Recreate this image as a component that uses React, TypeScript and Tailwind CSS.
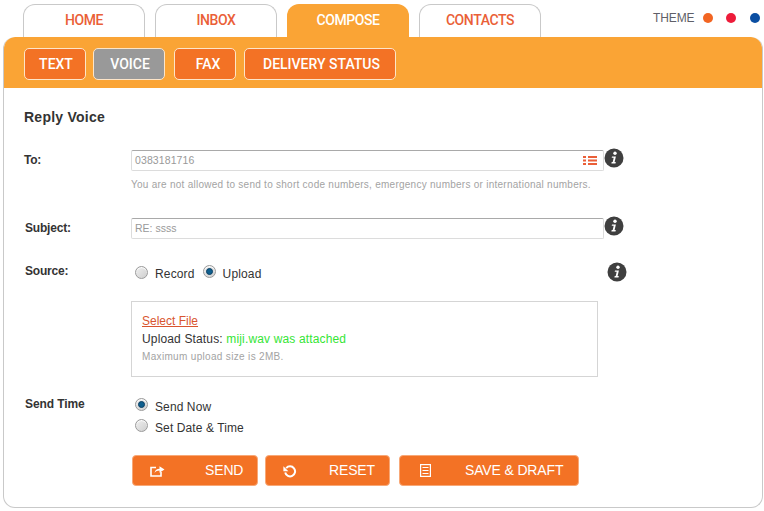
import React from "react";

const Tab = ({ label, active }: { label: string; active?: boolean }) => (
  <div
    className={
      active
        ? "w-[122px] h-[33px] rounded-t-[12px] bg-[#faa435] text-white flex items-center justify-center text-[14px] font-medium pb-[1px] tracking-[-0.4px]"
        : "w-[122px] h-[33px] rounded-t-[12px] border border-b-0 border-[#c9c9c9] bg-white text-[#ea5f38] flex items-center justify-center text-[14px] font-medium pb-[1px] tracking-[-0.4px]"
    }
  >
    {label}
  </div>
);

const Sub = ({ label, w, gray, pl }: { label: string; w: string; gray?: boolean; pl: string }) => (
  <div
    className={`${w} ${pl} ${gray ? "bg-[#999999]" : "bg-[#f37225]"} h-[32px] rounded-[5px] border border-[#fde5c8] text-white text-[14px] font-medium flex items-center justify-center`}
  >
    {label}
  </div>
);

const Info = () => (
  <svg width="20" height="20" viewBox="0 0 20 20" className="block">
    <circle cx="10" cy="10" r="9.5" fill="#3f3f3f" />
    <circle cx="11" cy="5.2" r="1.7" fill="#fff" />
    <path d="M8 8.4h3.9l-1.3 5.6h1.2l-.3 1.4H7.4l.3-1.4h1l1-4.2H7.7z" fill="#fff" />
  </svg>
);

const Radio = ({ on }: { on?: boolean }) => (
  <span className="mb-[2px] w-[13px] h-[13px] rounded-full border border-[#9a9a9a] bg-gradient-to-br from-[#efefef] to-[#cfcfcf] flex items-center justify-center shrink-0 shadow-[inset_0_1px_1px_#fff]">
    {on && <span className="w-[7px] h-[7px] rounded-full bg-[#0f5f8e] border border-[#0b3f63]" />}
  </span>
);

const ActionButton = ({ w, icon, label, pl, tx }: { w: string; icon: React.ReactNode; label: string; pl: string; tx: string }) => (
  <div className={`${w} ${pl} h-[31px] bg-[#f37225] rounded-[4px] border border-[#f8a877] text-white text-[14px] tracking-[-0.15px] flex items-center`}>
    <span className="w-[16px] flex justify-center shrink-0">{icon}</span>
    <span className={tx}>{label}</span>
  </div>
);

export default function App() {
  return (
    <div className="w-[764px] h-[511px] bg-white overflow-hidden font-['Liberation_Sans',Arial,sans-serif] text-[#333]">
      <div className="flex h-[37px] pt-[4px] pl-[23px] font-['Roboto',sans-serif]">
        <div className="flex gap-[10px]">
          <Tab label="HOME" />
          <Tab label="INBOX" />
          <Tab label="COMPOSE" active />
          <Tab label="CONTACTS" />
        </div>
        <div className="ml-[112px] flex items-start pt-[9px] font-['Liberation_Sans',sans-serif] text-[12px] leading-[10px] tracking-[-0.1px] text-[#5f5f68]">
          <span>THEME</span>
          <span className="ml-[8px] w-[10px] h-[10px] rounded-full bg-[#f26522]" />
          <span className="ml-[13px] w-[10px] h-[10px] rounded-full bg-[#ed1c3a]" />
          <span className="ml-[14px] w-[10px] h-[10px] rounded-full bg-[#0b4ea2]" />
        </div>
      </div>

      <div className="ml-[3px] w-[760px] h-[471px] rounded-[12px] border border-[#c9c9c9] border-t-0 overflow-hidden">
        <div className="-mx-px h-[51px] bg-[#faa435] rounded-t-[12px] flex gap-[8px] pl-[21px] pt-[11px] font-['Roboto',sans-serif]">
          <Sub label="TEXT" w="w-[62px]" pl="pl-[2px]" />
          <Sub label="VOICE" w="w-[72px] -ml-px" pl="pl-[2px]" gray />
          <Sub label="FAX" w="w-[62px] ml-px" pl="pl-[6px]" />
          <Sub label="DELIVERY STATUS" w="w-[152px]" pl="pl-[3px]" />
        </div>

        <div className="pl-[20px]">
          <h1 className="mt-[21px] h-[17px] text-[14px] leading-[17px] font-bold tracking-[0.25px] text-[#333]">Reply Voice</h1>

          <div className="mt-[24px] flex">
            <label className="w-[107px] text-[12px] leading-[14px] font-bold pt-[3px] tracking-[-0.2px]">To:</label>
            <div>
              <div className="flex items-start">
                <div className="w-[473px] h-[21px] border border-[#dcdcdc] border-t-[#a9a9a9] rounded-[2px] flex items-center justify-between pl-[3px] pr-[6px] text-[10.5px] tracking-[0.1px] text-[#999]">
                  <span>0383181716</span>
                  <svg width="14" height="11" viewBox="0 0 14 11" fill="#ea5f38">
                    <rect x="0" y="1" width="3" height="2" />
                    <rect x="5" y="1" width="9" height="2" />
                    <rect x="0" y="4.5" width="3" height="2" />
                    <rect x="5" y="4.5" width="9" height="2" />
                    <rect x="0" y="8" width="3" height="2" />
                    <rect x="5" y="8" width="9" height="2" />
                  </svg>
                </div>
                <span className="-mt-[2px]"><Info /></span>
              </div>
              <p className="mt-[8px] text-[10px] leading-[12px] tracking-[0.26px] text-[#a3a3a3]">
                You are not allowed to send to short code numbers, emergency numbers or international numbers.
              </p>
            </div>
          </div>

          <div className="mt-[27px] flex">
            <label className="w-[107px] pl-px text-[12px] leading-[14px] font-bold pt-[3px] tracking-[-0.2px]">Subject:</label>
            <div className="w-[473px] h-[21px] border border-[#dcdcdc] border-t-[#a9a9a9] rounded-[2px] flex items-center pl-[3px] text-[10.5px] text-[#999]">
              RE: ssss
            </div>
            <span className="-mt-[2px]"><Info /></span>
          </div>

          <div className="mt-[24px] flex">
            <label className="w-[107px] pl-px text-[12px] leading-[14px] font-bold pt-px tracking-[-0.2px]">Source:</label>
            <div className="w-[476px] flex items-center h-[16px] pl-[4px] pt-[4px] text-[12px] tracking-[0.15px]">
              <Radio />
              <span className="ml-[7px] mt-[2px]">Record</span>
              <span className="ml-[8px] mb-[2px]"><Radio on /></span>
              <span className="ml-[7px] mt-[2px]">Upload</span>
            </div>
            <span className="-mt-[1px]"><Info /></span>
          </div>

          <div className="ml-[107px] mt-[19px] w-[467px] h-[76px] border border-[#d5d5d5] pl-[10px] pt-[12px]">
            <div className="text-[12px] leading-[14px] text-[#d9552f] underline">Select File</div>
            <div className="mt-[4px] text-[12px] leading-[14px] tracking-[0.15px]">
              Upload Status: <span className="text-[#35e535]">miji.wav was attached</span>
            </div>
            <div className="mt-[5px] text-[10px] leading-[12px] tracking-[0.33px] text-[#a3a3a3]">Maximum upload size is 2MB.</div>
          </div>

          <div className="mt-[20px] flex">
            <label className="w-[107px] pl-px text-[12px] leading-[14px] font-bold tracking-[-0.1px]">Send Time</label>
            <div className="pl-[4px] text-[12px] tracking-[0.1px]">
              <div className="flex items-center h-[15px] mt-[1px]">
                <Radio on />
                <span className="ml-[7px] mt-[2px]">Send Now</span>
              </div>
              <div className="flex items-center h-[15px] mt-[6px]">
                <Radio />
                <span className="ml-[7px] mt-[2px]">Set Date &amp; Time</span>
              </div>
            </div>
          </div>

          <div className="mt-[21px] ml-[108px] flex gap-[7px]">
            <ActionButton
              w="w-[126px]"
              pl="pl-[16px]"
              tx="ml-[40px]"
              label="SEND"
              icon={
                <svg width="15" height="13" viewBox="0 0 15 13" fill="none" stroke="#fff" strokeWidth="1.6">
                  <path d="M6 3.5H1v8.5h10V8" />
                  <path d="M4.5 9C5 6 7 4.8 9.5 4.8V2.2L14.5 5.5 9.5 8.8V6.6C7.5 6.6 5.8 7.4 4.5 9z" fill="#fff" stroke="none" />
                </svg>
              }
            />
            <ActionButton
              w="w-[125px]"
              pl="pl-[16px]"
              tx="ml-[31px]"
              label="RESET"
              icon={
                <svg width="14" height="14" viewBox="0 0 14 14" fill="none" stroke="#fff" strokeWidth="2">
                  <path d="M3.2 4.2A5 5 0 1 1 2.2 8.5" />
                  <path d="M.4 2.2v5h5z" fill="#fff" stroke="none" />
                </svg>
              }
            />
            <ActionButton
              w="w-[180px] ml-[2px]"
              pl="pl-[17px]"
              tx="ml-[32px]"
              label="SAVE & DRAFT"
              icon={
                <svg width="11" height="13" viewBox="0 0 11 13" fill="none" stroke="#fff" strokeWidth="1.2">
                  <rect x=".6" y=".6" width="9.8" height="11.8" />
                  <path d="M2.5 3.5h6M2.5 6.5h6M2.5 9.5h6" />
                </svg>
              }
            />
          </div>
        </div>
      </div>
    </div>
  );
}
